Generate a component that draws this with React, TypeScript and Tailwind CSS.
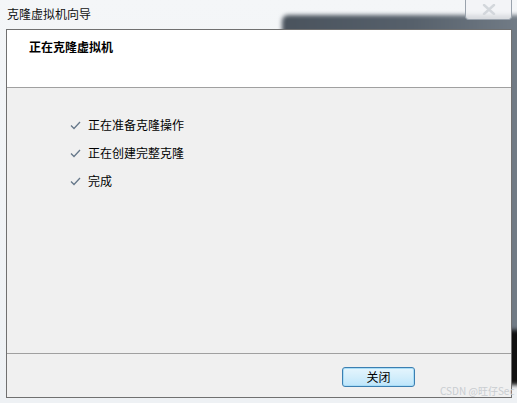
import React from "react";

const font = { fontFamily: '"Noto Sans CJK SC", "Liberation Sans", sans-serif' };

function Check() {
  return (
    <svg width="11" height="9" viewBox="0 0 11 9" className="shrink-0">
      <polyline points="1,4.5 4,7.5 10,1" fill="none" stroke="#66788a" strokeWidth="1.3" />
    </svg>
  );
}

export default function App() {
  const steps = ["正在准备克隆操作", "正在创建完整克隆", "完成"];
  return (
    <div
      className="relative w-[517px] h-[403px] overflow-hidden bg-gradient-to-b from-[#f4f6f8] to-[#eef1f4] text-[12px] text-black"
      style={font}
    >
      {/* blurred background behind glass frame */}
      <div className="absolute left-[282px] top-[15px] w-[260px] h-[340px] rounded-[6px] bg-gradient-to-r from-[#4a535d] via-[#56606b] to-[#78828c] blur-[2px]" />
      <div className="absolute left-[505px] top-[330px] w-[20px] h-[55px] bg-[#111] blur-[2px]" />
      <div className="relative flex flex-col">
        {/* title bar */}
        <div className="flex h-[29px] items-start">
          <div className="pl-[7px] pt-[6px] leading-[16px] text-[#111]">克隆虚拟机向导</div>
          <div className="ml-auto mr-[5px] w-[47px] h-[20px] rounded-b-[4px] border border-t-0 border-[#9aa3ad] bg-[#f2f4f6]/80 flex items-center justify-center">
            <svg width="14" height="11" viewBox="0 0 14 11">
              <path d="M2,1 L12,10 M12,1 L2,10" stroke="#d3d7dc" strokeWidth="2.4" strokeLinecap="round" fill="none" />
            </svg>
          </div>
        </div>
        {/* client area */}
        <div className="ml-[6px] w-[506px] h-[369px] border border-[#707070] bg-[#f0f0f0] flex flex-col">
          <div className="h-[58px] bg-white border-b border-[#a0a0a0] pl-[22px] pt-[9px] font-bold leading-[16px]">
            正在克隆虚拟机
          </div>
          <div className="h-[265px] pl-[63px] pt-[29px] flex flex-col gap-[12px]">
            {steps.map((s) => (
              <div key={s} className="flex items-center gap-[7px] h-[16px] leading-[16px]">
                <Check />
                <span>{s}</span>
              </div>
            ))}
          </div>
          <div className="flex-1 border-t border-[#a0a0a0] flex justify-end items-start pt-[13px] pr-[96px]">
            <button className="w-[73px] h-[20px] rounded-[3px] border border-[#3c7fb1] bg-gradient-to-b from-[#e5f5fd] via-[#d3eefb] to-[#bde5fb] shadow-[inset_0_0_0_1px_#a8ddf7] text-[12px] leading-[16px] text-black">
              关闭
            </button>
          </div>
        </div>
      </div>
      <div className="absolute left-[440px] top-[385px] whitespace-nowrap text-[10px] leading-[12px] text-[#c9cdd1]">CSDN @旺仔Sec</div>
    </div>
  );
}
